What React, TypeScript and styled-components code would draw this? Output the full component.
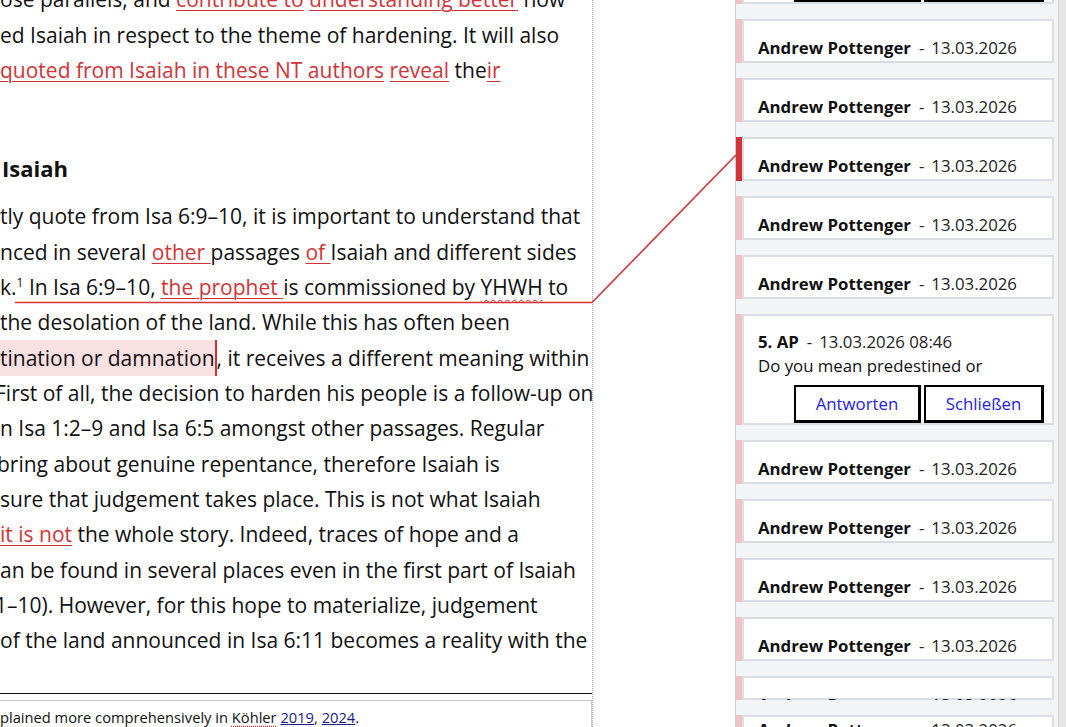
import styled, { createGlobalStyle } from "styled-components";

const GlobalStyle = createGlobalStyle`
    html, body {
        margin: 0;
        padding: 0;
        background: #ffffff;
    }
    #root {
        width: 1066px;
        height: 727px;
    }
`;

const RED = "#d13438";

const Screen = styled.div`
    position: relative;
    display: flex;
    width: 1066px;
    height: 727px;
    overflow: hidden;
`;

const Doc = styled.main`
    flex: 0 0 735px;
    background: #ffffff;
    overflow: hidden;
`;

const Page = styled.div`
    width: 592px;
    height: 100%;
    border-right: 1px dotted #aaaaaa;
    display: flex;
    flex-direction: column;
    font-family: "Open Sans", "Noto Sans", sans-serif;
    color: #111111;
`;

const Body = styled.div`
    margin-top: -17.6px;
    font-size: 21px;
    line-height: 35.33px;
`;

const Line = styled.div<{ $shift?: number }>`
    white-space: nowrap;
    margin-left: ${(p) => (p.$shift ? -p.$shift : 0)}px;
`;

const Heading = styled.h2`
    margin: 62px 0 13px;
    padding-left: 2px;
    font-size: 22px;
    line-height: 36px;
    font-weight: 700;
`;

const Ins = styled.span`
    color: ${RED};
    text-decoration: underline;
    text-decoration-thickness: 1px;
    text-underline-offset: 3px;
`;

const Spell = styled.span`
    text-decoration: underline wavy #e02020;
    text-decoration-thickness: 1px;
    text-underline-offset: 4px;
`;

const Marked = styled.span`
    background: #f9e0e1;
    padding: 4px 0;
    border-right: 2px solid ${RED};
`;

const Sup = styled.sup`
    font-size: 12px;
    line-height: 0;
`;

const FootRule = styled.hr`
    margin: 34px 0 0;
    border: none;
    border-top: 1px solid #111111;
`;

const FootBox = styled.div`
    margin-top: 6px;
    border: 1px solid #c8c8c8;
    border-left: none;
    border-bottom: none;
    flex: 1;
    padding-top: 6px;
    font-size: 14.7px;
    line-height: 20px;
    white-space: nowrap;
`;

const Cite = styled.span`
    color: #1a1a8c;
    text-decoration: underline;
`;

const Dotted = styled.span`
    text-decoration: underline dotted #e02020;
    text-underline-offset: 3px;
`;

const Pane = styled.aside`
    flex: 1;
    display: flex;
    background: #f3f4f6;
    border-left: 1px solid #cccccc;
    font-family: "Open Sans", "Noto Sans", sans-serif;
    font-size: 16.8px;
    color: #111111;
`;

const List = styled.div`
    flex: 1;
    padding-right: 4px;
    overflow: hidden;
`;

const Scroll = styled.div`
    margin-top: -107px;
`;

const Track = styled.div`
    width: 7px;
    background: #e6e6e6;
    border-left: 1px solid #d2d2d2;
`;

const Card = styled.div<{ $active?: boolean; $clip?: number }>`
    display: flex;
    margin-bottom: 15px;
    height: ${(p) => (p.$clip ? `${p.$clip}px` : "auto")};
    overflow: hidden;
    &::before {
        content: "";
        flex: 0 0 6px;
        background: ${(p) => (p.$active ? RED : "#f0c2c5")};
    }
`;

const CardBody = styled.div<{ $tight?: boolean }>`
    flex: 1;
    background: #ffffff;
    border: 2px solid #d9dde4;
    padding: ${(p) => (p.$tight ? "0" : "14px")} 8px 0 14px;
    line-height: 26px;
    white-space: nowrap;
`;

const Author = styled.b`
    font-weight: 700;
`;

const Sep = styled.span`
    margin: 0 7px 0 8px;
    color: #222222;
`;

const Meta = styled.span`
    color: #222222;
`;

const Text = styled.div`
    line-height: 24px;
`;

const Actions = styled.div`
    display: flex;
    justify-content: flex-end;
    gap: 3px;
    margin-top: 7px;
`;

const Btn = styled.button<{ $w: number }>`
    width: ${(p) => p.$w}px;
    height: 38px;
    background: #ffffff;
    border: 2px solid #000000;
    border-right-width: 3px;
    border-bottom-width: 3px;
    color: #2020e8;
    font-family: inherit;
    font-size: 16.8px;
    padding: 0;
`;

const Connector = styled.svg`
    position: absolute;
    left: 0;
    top: 0;
    pointer-events: none;
`;

function Collapsed({ active, clip, tight }: { active?: boolean; clip?: number; tight?: boolean }) {
    return (
        <Card $active={active} $clip={clip}>
            <CardBody $tight={tight}>
                <Author>Andrew Pottenger</Author>
                <Sep>-</Sep>
                <Meta>13.03.2026</Meta>
            </CardBody>
        </Card>
    );
}

function Expanded() {
    return (
        <Card>
            <CardBody>
                <Text>
                    <Author>5. AP</Author>
                    <Sep>-</Sep>
                    <Meta>13.03.2026 08:46</Meta>
                </Text>
                <Text>Do you mean predestined or</Text>
                <Actions>
                    <Btn $w={127}>Antworten</Btn>
                    <Btn $w={120}>Schließen</Btn>
                </Actions>
            </CardBody>
        </Card>
    );
}

export default function App() {
    return (
        <Screen>
            <GlobalStyle />
            <Doc>
                <Page>
                    <Body>
                        <Line>
                            ose parallels, and <Ins>contribute to</Ins> <Ins>understanding better</Ins> how
                        </Line>
                        <Line>ed Isaiah in respect to the theme of hardening. It will also</Line>
                        <Line>
                            <Ins>quoted from Isaiah in these NT authors</Ins> <Ins>reveal</Ins> the<Ins>ir</Ins>
                        </Line>
                        <Heading>Isaiah</Heading>
                        <Line>tly quote from Isa 6:9–10, it is important to understand that</Line>
                        <Line>
                            nced in several <Ins>other </Ins>passages <Ins>of </Ins>Isaiah and different sides
                        </Line>
                        <Line>
                            k.<Sup>1</Sup> In Isa 6:9–10, <Ins>the prophet </Ins>is commissioned by <Spell>YHWH</Spell> to
                        </Line>
                        <Line>the desolation of the land. While this has often been</Line>
                        <Line>
                            <Marked>tination or damnation</Marked>, it receives a different meaning within
                        </Line>
                        <Line $shift={5}>First of all, the decision to harden his people is a follow-up on</Line>
                        <Line>n Isa 1:2–9 and Isa 6:5 amongst other passages. Regular</Line>
                        <Line $shift={3}>bring about genuine repentance, therefore Isaiah is</Line>
                        <Line>sure that judgement takes place. This is not what Isaiah</Line>
                        <Line>
                            <Ins>it is not</Ins> the whole story. Indeed, traces of hope and a
                        </Line>
                        <Line>an be found in several places even in the first part of Isaiah</Line>
                        <Line $shift={5}>1–10). However, for this hope to materialize, judgement</Line>
                        <Line>of the land announced in Isa 6:11 becomes a reality with the</Line>
                    </Body>
                    <FootRule />
                    <FootBox>
                        plained more comprehensively in <Dotted>Köhler</Dotted> <Cite>2019</Cite>, <Cite>2024</Cite>.
                    </FootBox>
                </Page>
            </Doc>
            <Pane>
                <List>
                    <Scroll>
                        <Expanded />
                        <Collapsed />
                        <Collapsed />
                        <Collapsed active />
                        <Collapsed />
                        <Collapsed />
                        <Expanded />
                        <Collapsed />
                        <Collapsed />
                        <Collapsed />
                        <Collapsed />
                        <Collapsed clip={24} />
                        <Collapsed tight />
                    </Scroll>
                </List>
                <Track />
            </Pane>
            <Connector width={1066} height={727}>
                <polyline points="15,302.5 592,302.5 736,155" fill="none" stroke={RED} strokeWidth={1.6} />
            </Connector>
        </Screen>
    );
}
